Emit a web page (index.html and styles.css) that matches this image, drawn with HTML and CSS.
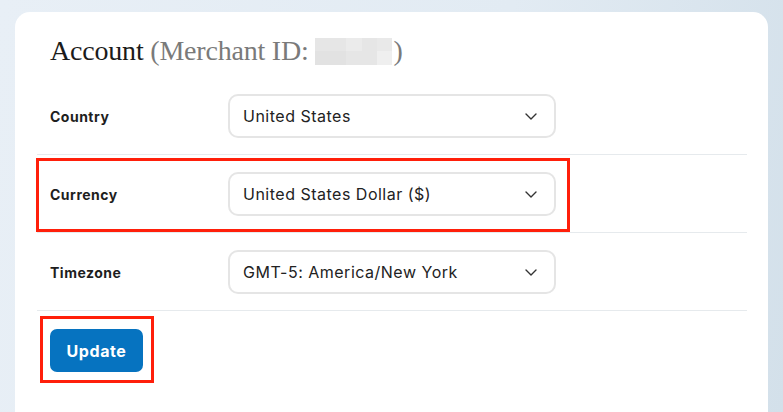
FILE: index.html
```html
<!DOCTYPE html>
<html>
<head>
<meta charset="utf-8">
<link rel="stylesheet" href="styles.css">
</head>
<body>
<div class="card">
  <h1 class="title">Account <span class="muted">(Merchant ID: <span class="blur"></span>)</span></h1>
  <div class="rows">
    <div class="row">
      <div class="label">Country</div>
      <div class="select"><span>United States</span><svg class="chev" width="12" height="7" viewBox="0 0 12 7"><path d="M1 1l5 5 5-5" fill="none" stroke="#333" stroke-width="1.4" stroke-linecap="round" stroke-linejoin="round"/></svg></div>
    </div>
    <div class="row">
      <div class="label">Currency</div>
      <div class="select"><span>United States Dollar ($)</span><svg class="chev" width="12" height="7" viewBox="0 0 12 7"><path d="M1 1l5 5 5-5" fill="none" stroke="#333" stroke-width="1.4" stroke-linecap="round" stroke-linejoin="round"/></svg></div>
      <div class="mark mark-row"></div>
    </div>
    <div class="row">
      <div class="label">Timezone</div>
      <div class="select"><span>GMT-5: America/New York</span><svg class="chev" width="12" height="7" viewBox="0 0 12 7"><path d="M1 1l5 5 5-5" fill="none" stroke="#333" stroke-width="1.4" stroke-linecap="round" stroke-linejoin="round"/></svg></div>
    </div>
    <div class="actions">
      <button class="btn">Update</button>
      <div class="mark mark-btn"></div>
    </div>
  </div>
</div>
</body>
</html>
```
FILE: styles.css
```css
html, body {
  margin: 0;
  padding: 0;
  height: 100%;
}
body {
  background: linear-gradient(100deg, #e8eff6 0%, #e2ebf3 60%, #d3e0ea 100%);
  font-family: "Inter", "Open Sans", sans-serif;
  overflow: hidden;
}
.card {
  margin: 12px 15px 0 15px;
  background: #fff;
  border-radius: 15px 15px 0 0;
  height: 420px;
  padding: 0 21px 0 22px;
  box-sizing: border-box;
}
.title {
  margin: 0;
  height: 64px;
  box-sizing: border-box;
  padding: 23px 0 0 13px;
  font-family: "Liberation Serif", serif;
  font-weight: normal;
  font-size: 28px;
  line-height: 32px;
  color: #1b1b1b;
  letter-spacing: -0.2px;
}
.muted {
  color: #7a7a7a;
}
.blur {
  display: inline-block;
  width: 77px;
  height: 27px;
  vertical-align: -5px;
  margin: 0 1px 0 0;
  background:
    linear-gradient(#ebebeb, #ebebeb) 31px 0 / 16px 13px no-repeat,
    linear-gradient(#e9e9e9, #e9e9e9) 62px 0 / 15px 13px no-repeat,
    linear-gradient(#e2e2e2, #e2e2e2) 0 13px / 31px 14px no-repeat,
    linear-gradient(#efefef, #efefef) 62px 13px / 15px 14px no-repeat,
    #e6e6e6;
}
.rows {
  display: flex;
  flex-direction: column;
}
.row {
  position: relative;
  display: flex;
  align-items: center;
  padding: 17px 0 16px 13px;
  border-bottom: 1px solid #e6eaed;
}
.row:first-child { padding-top: 18px; }
.label {
  width: 178px;
  flex: none;
  font-size: 14px;
  font-weight: 700;
  letter-spacing: 0.5px;
  color: #1e1e1e;
}
.select {
  width: 328px;
  height: 44px;
  box-sizing: border-box;
  border: 2px solid #e5e5e5;
  border-radius: 10px;
  display: flex;
  align-items: center;
  justify-content: space-between;
  padding: 0 17px 0 13px;
  font-size: 16px;
  letter-spacing: 0.5px;
  color: #222;
}
.chev { display: block; }
.mark {
  position: absolute;
  border: 3px solid #ff1f0a;
  box-sizing: border-box;
  pointer-events: none;
}
.mark-row {
  left: -1px;
  top: 3px;
  width: 534px;
  height: 74px;
}
.actions {
  position: relative;
  padding: 18px 0 0 13px;
}
.btn {
  display: block;
  width: 93px;
  height: 43px;
  border: none;
  border-radius: 7px;
  background: #0673c0;
  color: #fff;
  font-family: "Inter", sans-serif;
  font-weight: 700;
  font-size: 16px;
  letter-spacing: 0.6px;
  padding: 0;
}
.mark-btn {
  left: 3px;
  top: 5px;
  width: 114px;
  height: 67px;
}
```
